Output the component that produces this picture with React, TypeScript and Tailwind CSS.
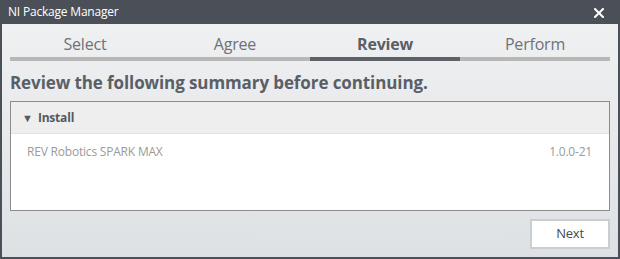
import React from 'react'

const tabs = ['Select', 'Agree', 'Review', 'Perform']
const active = 2

export default function App() {
  return (
    <div
      className="w-[620px] h-[259px] bg-[#4b5058] flex flex-col px-[2px] pb-[2px] overflow-hidden"
      style={{ fontFamily: '"Open Sans", "Noto Sans", sans-serif' }}
    >
      {/* Title bar */}
      <div className="h-[24px] flex items-center justify-between pl-[6px] pr-[14px] shrink-0">
        <span className="text-white text-[12px] tracking-[-0.2px]">NI Package Manager</span>
        <svg width="10" height="10" viewBox="0 0 10 10" className="mt-[1px]">
          <path d="M1 1 L9 9 M9 1 L1 9" stroke="white" strokeWidth="2" strokeLinecap="square" />
        </svg>
      </div>

      {/* Body */}
      <div className="flex-1 flex flex-col px-[8px] bg-gradient-to-b from-[#eff0f2] to-[#dee1e4]">
        {/* Step tabs */}
        <div className="grid grid-cols-4 pt-[7px]">
          {tabs.map((t, i) => (
            <div key={t} className="flex flex-col">
              <div
                className={`h-[26px] flex items-center justify-center text-[16px] tracking-[-0.2px] ${
                  i === active ? 'font-bold text-[#5a5f66]' : 'text-[#6e7277]'
                }`}
              >
                {t}
              </div>
              <div className={`h-[4px] ${i === active ? 'bg-[#5d6268]' : 'bg-[#b7b7b7]'}`} />
            </div>
          ))}
        </div>

        {/* Heading */}
        <h1 className="mt-[11px] text-[17px] font-bold text-[#5a5f66] leading-[22px] tracking-[-0.1px]">
          Review the following summary before continuing.
        </h1>

        {/* Summary box */}
        <div className="mt-[7px] h-[110px] border border-[#8c8c8c] bg-white flex flex-col">
          <div className="h-[32px] bg-[#eeeeee] border-b border-[#e2e2e2] flex items-center pl-[11px] gap-[5px]">
            <span className="text-[11px] text-[#555a60] leading-none">▼</span>
            <span className="text-[12px] font-bold text-[#555a60] tracking-[-0.2px] mt-[1px]">Install</span>
          </div>
          <div className="flex items-center justify-between pl-[16px] pr-[17px] h-[36px] text-[12px] text-[#9a9a9a] tracking-[-0.2px]">
            <span>REV Robotics SPARK MAX</span>
            <span>1.0.0-21</span>
          </div>
        </div>

        {/* Footer */}
        <div className="flex justify-end mt-[8px]">
          <button className="w-[80px] h-[30px] bg-white border-2 border-[#c9ced3] text-[13px] text-[#45494e] tracking-[-0.2px]">
            Next
          </button>
        </div>
      </div>
    </div>
  )
}
